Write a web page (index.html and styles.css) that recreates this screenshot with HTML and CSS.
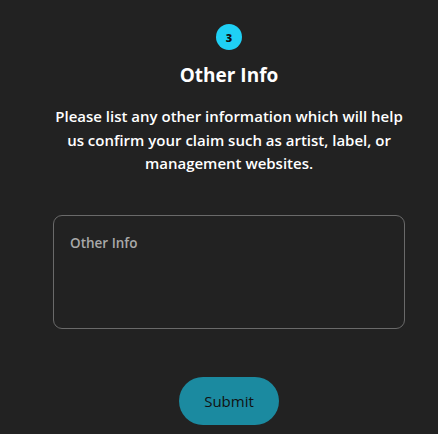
FILE: index.html
```html
<!DOCTYPE html>
<html>
<head>
<meta charset="utf-8">
<link rel="stylesheet" href="styles.css">
</head>
<body>
<div class="page">
  <div class="step">3</div>
  <h2 class="title">Other Info</h2>
  <p class="desc">Please list any other information which will help us confirm your claim such as artist, label, or management websites.</p>
  <div class="field">
    <span class="label">Other Info</span>
  </div>
  <button class="submit">Submit</button>
</div>
</body>
</html>
```
FILE: styles.css
```css
html, body {
  margin: 0;
  padding: 0;
  background: #222222;
  height: 100%;
  overflow: hidden;
}
.page {
  padding-left: 20px;
  display: flex;
  flex-direction: column;
  align-items: center;
  font-family: "Open Sans", "Noto Sans", sans-serif;
  color: #ffffff;
}
.step {
  margin-top: 24px;
  width: 26px;
  height: 26px;
  border-radius: 50%;
  background: #1fd0f5;
  color: #111;
  font-size: 11px;
  font-weight: 800;
  display: flex;
  align-items: center;
  justify-content: center;
}
.title {
  margin: 12px 0 0;
  font-size: 19px;
  font-weight: 700;
  line-height: 26px;
}
.desc {
  margin: 17px 0 0;
  width: 360px;
  text-align: center;
  font-size: 15px;
  font-weight: 600;
  line-height: 23.5px;
}
.field {
  margin-top: 39px;
  box-sizing: border-box;
  width: 352px;
  height: 114px;
  border: 1px solid #6a6a6a;
  border-radius: 9px;
  padding: 16px 16px;
  line-height: 20px;
}
.label {
  color: #a9a9a9;
  font-size: 13.5px;
  font-weight: 600;
}
.submit {
  margin-top: 48px;
  width: 100px;
  height: 48px;
  border: none;
  border-radius: 24px;
  background: #1b8aa0;
  color: #111;
  font-family: "Open Sans", "Noto Sans", sans-serif;
  font-size: 15px;
  font-weight: 500;
}
```
